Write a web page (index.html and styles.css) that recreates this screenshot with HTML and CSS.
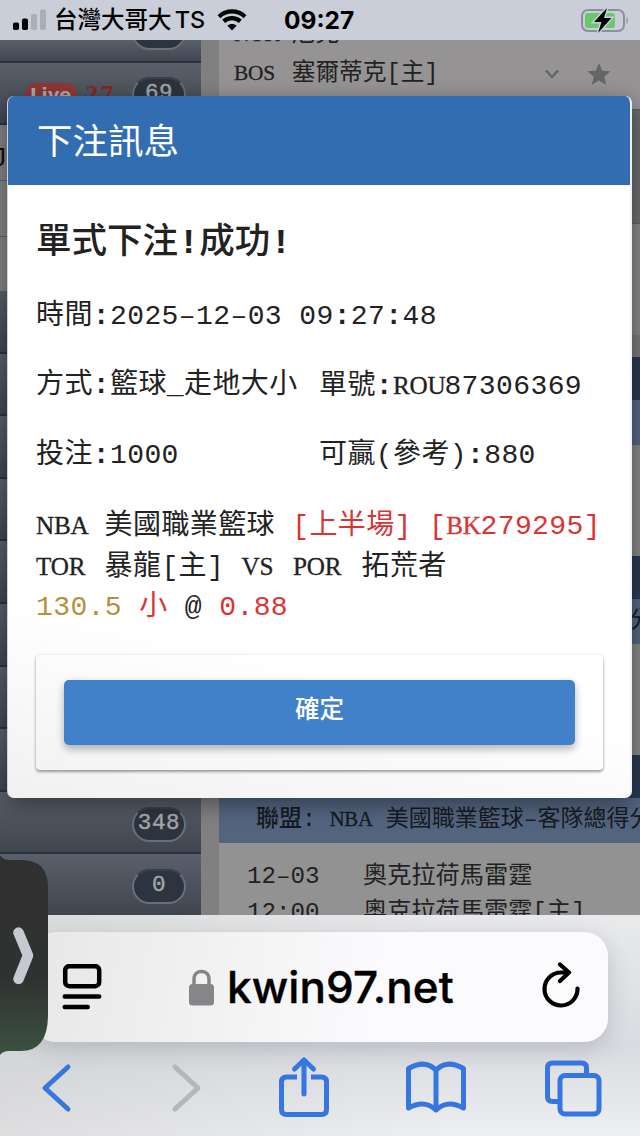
FILE: index.html
```html
<!DOCTYPE html>
<html lang="zh-Hant">
<head>
    <meta charset="UTF-8">
    <meta name="viewport" content="width=device-width, initial-scale=1.0">
    <title>下注訊息</title>

    <link rel="stylesheet" href="styles.css">
</head>
<body>
    <div class="status">
        <svg class="signal" width="34" height="22" viewBox="0 0 34 22">
            <rect x="0" y="13.5" width="6" height="7.5" rx="1.8"/>
            <rect x="9" y="9.5" width="6" height="11.5" rx="1.8"/>
            <rect x="18" y="5" width="6" height="16" rx="1.8" fill="#a9aeb7"/>
            <rect x="27" y="0.5" width="6" height="20.5" rx="1.8" fill="#a9aeb7"/>
        </svg>
        <span class="carrier">台灣大哥大 <span>TS</span></span>
        <svg class="wifi" width="30" height="22" viewBox="0 0 30 22">
            <path d="M2 7.700C9.200 .7 20.800 .7 28 7.700M6.700 12.400c4.700-4.300 11.900-4.300 16.600 0" fill="none" stroke="#000" stroke-width="4.200"/>
            <path d="M15 21.500l-4.700-4.700c2.600-2.300 6.800-2.300 9.400 0z"/>
        </svg>
        <span class="time">09:27</span>
        <svg class="battery" width="50" height="28" viewBox="0 0 50 28">
            <rect x="2" y="4" width="42" height="21" rx="6" fill="none" stroke="#8b9099" stroke-width="2"/>
            <rect x="5" y="7" width="30" height="15" rx="3" fill="#69c86c"/>
            <path d="M46.500 11c1.800 1 1.800 6 0 7z" fill="#8b9099"/>
            <path d="M27 2L14 16h7.500L18 27l13.500-15H24z" stroke="#c9ced8" stroke-width="3"/>
            <path d="M27 2L14 16h7.500L18 27l13.500-15H24z"/>
        </svg>
    </div>

    <div class="page">
        <div class="side">
            <div class="item first"><b class="badge">12</b></div>
            <div class="item"><span class="live">Live</span><span class="count">27</span><b class="badge">69</b></div>
            <div class="user">
                <div class="name">J</div>
                <div></div>
                <div></div>
            </div>
            <div class="item"></div>
            <div class="item"></div>
            <div class="item"></div>
            <div class="item"></div>
            <div class="item"></div>
            <div class="item"></div>
            <div class="item"></div>
            <div class="item"></div>
            <div class="item"><b class="badge">348</b></div>
            <div class="item"><b class="badge">0</b></div>
        </div>

        <div class="games">
            <div class="match">
                <div class="teams">
                    <div><span class="lt">NYK</span> 尼克</div>
                    <div><span class="lt">BOS</span> 塞爾蒂克[主]</div>
                </div>
                <svg width="14" height="10" viewBox="0 0 14 10"><path d="M1 1.500l6 6.500 6-6.500" fill="none" stroke="#656565" stroke-width="2.500"/></svg>
                <svg width="24" height="24" viewBox="0 0 24 24"><path d="M12 1l3.200 7.700 8.300.6-6.300 5.400 2 8.100L12 18.400l-7.200 4.400 2-8.100L.5 9.300l8.300-.6z" fill="#656565"/></svg>
            </div>
            <div class="gap dark"></div>
            <div class="gap"></div>
            <div class="gap line"></div>
            <div class="bar"></div>
            <div class="league"></div>
            <div class="gap"></div>
            <div class="bar"></div>
            <div class="league"><b>聯盟:</b> <span class="lt">NBA</span> 美國職業籃球–主隊總得分</div>
            <div class="gap"></div>
            <div class="bar"></div>
            <div class="league"><b>聯盟:</b> <span class="lt">NBA</span> 美國職業籃球–客隊總得分</div>
            <div class="game">
                <span>12–03</span><span>奧克拉荷馬雷霆</span>
                <span>12:00</span><span>奧克拉荷馬雷霆[主]</span>
            </div>
        </div>
    </div>

    <div class="modal">
        <div class="title">下注訊息</div>
        <div class="content">
            <h2>單式下注<b>!</b>成功<b>!</b></h2>
            <p>時間<b>:</b>2025–12–03 09<b>:</b>27<b>:</b>48</p>
            <div class="row">
                <p>方式<b>:</b>籃球_走地大小</p>
                <p>單號<b>:</b><span class="lt">ROU</span>87306369</p>
            </div>
            <div class="row">
                <p>投注<b>:</b>1000</p>
                <p>可贏(參考)<b>:</b>880</p>
            </div>
            <div class="bet">
                <div><span class="lt">NBA</span> 美國職業籃球 <span class="red">[上半場] [<span class="lt two">BK</span>279295]</span></div>
                <div><span class="lt">TOR</span> 暴龍[主] <span class="lt two">VS</span> <span class="lt">POR</span> 拓荒者</div>
                <div><span class="gold">130.5</span> <span class="red">小</span> @ <span class="red">0.88</span></div>
            </div>
            <div class="actions">
                <button class="ok">確定</button>
            </div>
        </div>
    </div>

    <div class="browser">
        <div class="address">
            <svg width="40" height="46" viewBox="0 0 40 46" fill="none" stroke="#000" stroke-width="4.500" stroke-linecap="round">
                <rect x="3.200" y="2.200" width="34" height="20" rx="4"/>
                <path d="M2.700 32.500h34.500M2.700 43h23"/>
            </svg>
            <div class="url">
                <svg width="27" height="37" viewBox="0 0 27 37">
                    <rect x="1" y="15" width="25" height="21.500" rx="3.500" fill="#868688"/>
                    <path d="M6 17v-7c0-10 15-10 15 0v7" fill="none" stroke="#868688" stroke-width="3.500"/>
                </svg>
                <span>kwin97.net</span>
            </div>
            <svg class="reload" width="38" height="46" viewBox="0 0 38 46" fill="none" stroke="#000" stroke-width="4.200" stroke-linecap="round" stroke-linejoin="round">
                <path d="M35.500 26.500a16.500 16.500 0 1 1-16.500-16h8M18 2.500l9 8-9 8.500"/>
            </svg>
        </div>
        <div class="toolbar">
            <svg width="60" height="64" viewBox="0 0 60 64"><path d="M40 11L17 32l23 21"/></svg>
            <svg class="off" width="60" height="64" viewBox="0 0 60 64"><path d="M20 11l23 21-23 21"/></svg>
            <svg width="60" height="64" viewBox="0 0 60 64">
                <path d="M23 21h-10.500q-5 0-5 5v27.500q0 5 5 5h35q5 0 5-5V26q0-5-5-5H37" stroke-linecap="butt"/>
                <path d="M30 38V4.500M20.500 13L30 4l9.500 9"/>
            </svg>
            <svg width="60" height="64" viewBox="0 0 60 64">
                <path d="M30 14Q19 3 2.500 12.500V52q16-9 27.500 2 11.500-11 27.500-2V12.500Q41 3 30 14v40"/>
            </svg>
            <svg width="60" height="64" viewBox="0 0 60 64">
                <rect x="17" y="19.500" width="39" height="38.500" rx="5"/>
                <path d="M43.500 19v-7q0-5-5-5h-29q-5 0-5 5v28.500q0 5 5 5h7" stroke-linecap="butt"/>
            </svg>
        </div>
    </div>

    <svg class="handle" width="48" height="206" viewBox="0 0 48 206">
        <defs>
            <linearGradient id="glass" x1="0" y1="0" x2="0" y2="1">
                <stop offset="0" stop-color="#303030"/>
                <stop offset=".62" stop-color="#303231"/>
                <stop offset="1" stop-color="#3b5341"/>
            </linearGradient>
        </defs>
        <path d="M0 2Q3 7 9 7h12q27 0 27 27v128q0 36-27 36H9q-6 0-9 4z" fill="url(#glass)"/>
        <path d="M18.500 79.500l9.500 23-9.500 23.500" fill="none" stroke="#c6c9d0" stroke-width="10.500" stroke-linecap="round" stroke-linejoin="round"/>
    </svg>
</body>
</html>
```
FILE: styles.css
```css
* {
    box-sizing: border-box;
}

body {
    position: relative;
    margin: 0;
    width: 640px;
    height: 1136px;
    overflow: hidden;
    font-family: "Liberation Mono", "Noto Sans CJK TC", monospace;
    color: #222;
}

svg {
    flex: none;
}

/* serif capitals, kept on the mono grid */
.lt {
    display: inline-block;
    width: 2.04em;
    font-family: "Liberation Serif", serif;
    font-size: 0.9em;
    letter-spacing: -0.2px;
    -webkit-text-stroke: 0.3px;
}

.lt.two {
    width: 1.36em;
}

.status {
    height: 40px;
    display: flex;
    align-items: center;
    padding: 0 14px 0 13px;
    background: #c9ced8;
    color: #000;
    font-family: Inter, "Noto Sans CJK TC", sans-serif;
}

.carrier {
    width: 154px;
    margin-left: 7px;
    font-size: 23.5px;
    font-weight: 500;
    line-height: 38px;
    white-space: nowrap;
}

.carrier span {
    margin-left: -3px;
}

.wifi {
    margin-left: 9px;
}

.time {
    margin-left: 37px;
    font-size: 24.5px;
    font-weight: 700;
}

.battery {
    margin-left: auto;
    margin-right: -4px;
}

.page {
    height: 875px;
    display: grid;
    grid-template-columns: 201px 421px;
    column-gap: 18px;
    overflow: hidden;
    background: #808080;
}

.side {
    background: #828282;
}

.item {
    height: 62.6px;
    display: flex;
    align-items: center;
    padding: 4px 15px 0 25px;
    border-bottom: 2px solid #2b323d;
    background: linear-gradient(#5a606a, #3f4650);
}

.item.first {
    height: 22.5px;
    align-items: flex-end;
    padding-bottom: 11px;
}

.badge {
    width: 54px;
    height: 35px;
    margin-left: auto;
    border: 2px solid #6a7078;
    border-top-color: #38404b;
    border-radius: 18px;
    background: #2c353f;
    color: #a4a7aa;
    font-size: 22.5px;
    font-weight: 400;
    line-height: 29px;
    letter-spacing: 0.6px;
    text-align: center;
    -webkit-text-stroke: 0.4px;
}

.live {
    padding: 0 5px;
    border-radius: 10px;
    background: #8f3737;
    color: #aaa;
    font-family: "DejaVu Sans", sans-serif;
    font-size: 18px;
    font-weight: 700;
    line-height: 24px;
}

.count {
    margin-left: 9px;
    color: #8a2525;
    font-family: "Liberation Serif", serif;
    font-size: 26px;
    font-weight: 700;
    letter-spacing: 2px;
}

.user {
    height: 166px;
}

.user div {
    height: 56px;
    border-bottom: 1px solid #5f666c;
}

.user .name {
    padding: 12px 0 0;
    margin-left: -7px;
    color: #111;
    font: 26px/40px "Liberation Sans", sans-serif;
}

.games {
    background: #929292;
    font-size: 23px;
    white-space: nowrap;
}

.match {
    height: 69px;
    display: flex;
    align-items: flex-end;
    padding: 0 29px 24px 15px;
    background: #959393;
}

.match svg {
    margin: 0 -1px 6px 0;
}

.match svg:last-child {
    margin: 0 0 -1px 29px;
}

.teams {
    flex: 1;
    margin-bottom: -8px;
    font-size: 23.7px;
    line-height: 38px;
}

.gap {
    height: 111px;
    background: #858585;
}

.gap.dark {
    height: 115px;
    background: #6b6b6b;
    border-top: 2px solid #626262;
    border-bottom: 1px solid #5e5e5e;
}

.gap.line {
    height: 22px;
    background: #777;
}

.bar {
    height: 43px;
    background: #293851;
}

.league {
    height: 45px;
    padding: 2px 0 0 37px;
    line-height: 38px;
    background: #53647f;
    color: #161a22;
}

.league b {
    font-weight: 500;
}

.game {
    display: grid;
    grid-template-columns: 116px 1fr;
    padding: 16px 28px;
    font-size: 24.2px;
    line-height: 36px;
}

.modal {
    position: absolute;
    left: 7px;
    top: 96px;
    width: 625px;
    height: 702px;
    border-right: 2px solid #eef1f7;
    border-left: 1px solid #cbd3e0;
    border-radius: 7px;
    overflow: hidden;
    background: linear-gradient(12deg, #f1f1f1, #fff 24%);
    box-shadow: 0 6px 22px rgba(0, 0, 0, 0.4);
}

.title {
    height: 88.5px;
    padding-left: 29px;
    background: #326db2;
    color: #fff;
    font: 35.5px/86px "Noto Sans CJK TC", sans-serif;
}

.content {
    padding: 19px 27px 0 28px;
    font-size: 28px;
    letter-spacing: 0.4px;
    white-space: nowrap;
}

.content h2 {
    margin: 0;
    height: 78px;
    font-size: 35.5px;
    font-weight: 500;
    line-height: 80px;
    letter-spacing: 0;
}

.content p {
    margin: 0;
    height: 69.7px;
    line-height: 70px;
}

.row {
    display: grid;
    grid-template-columns: 283px 1fr;
}

.bet {
    margin-top: 14px;
    line-height: 41px;
}

.bet div {
    height: 41px;
}

.red {
    color: #d93434;
}

.gold {
    color: #b3923a;
}

.actions {
    height: 115px;
    margin: 27px 0 0;
    padding: 25px 28px;
    border-radius: 4px;
    box-shadow: 0 2px 3px rgba(0, 0, 0, 0.35), 0 0 3px rgba(0, 0, 0, 0.12);
}

.ok {
    display: block;
    width: 100%;
    height: 65px;
    padding: 0 0 9px;
    border: 0;
    border-radius: 5px;
    background: #4181ca;
    box-shadow: 0 4px 8px rgba(0, 0, 0, 0.3);
    color: #fff;
    font: 500 24.5px "Noto Sans CJK TC", sans-serif;
}

.browser {
    height: 221px;
    padding: 17px 32px 0;
    background: linear-gradient(90deg, rgba(205, 205, 205, 0.5), rgba(235, 235, 240, 0) 70%), linear-gradient(#e9eaec, #d9dbe0 60%, #eeeff1);
}

.address {
    height: 110px;
    display: flex;
    align-items: center;
    padding: 0 28px 0 30px;
    border-radius: 24px;
    background: linear-gradient(100deg, #e7e7e7, #fbfbfd 60%);
    box-shadow: 0 6px 22px rgba(70, 75, 90, 0.22);
}

.reload {
    margin-bottom: 5px;
}

.url {
    flex: 1;
    display: flex;
    align-items: center;
    margin-left: 86px;
    color: #000;
    font: 500 44px Inter, sans-serif;
    letter-spacing: 0.1px;
    -webkit-text-stroke: 0.4px;
}

.url span {
    margin-left: 12px;
}

.toolbar {
    display: grid;
    grid-template-columns: 127px 119px 132px 137px 60px;
    margin: 14px -4px 0 -4px;
}

.toolbar svg {
    fill: none;
    stroke: #3775e1;
    stroke-width: 5;
    stroke-linecap: round;
    stroke-linejoin: round;
}

.toolbar .off {
    stroke: #b5b6b9;
}

.handle {
    position: absolute;
    left: 0;
    top: 853px;
}
```
